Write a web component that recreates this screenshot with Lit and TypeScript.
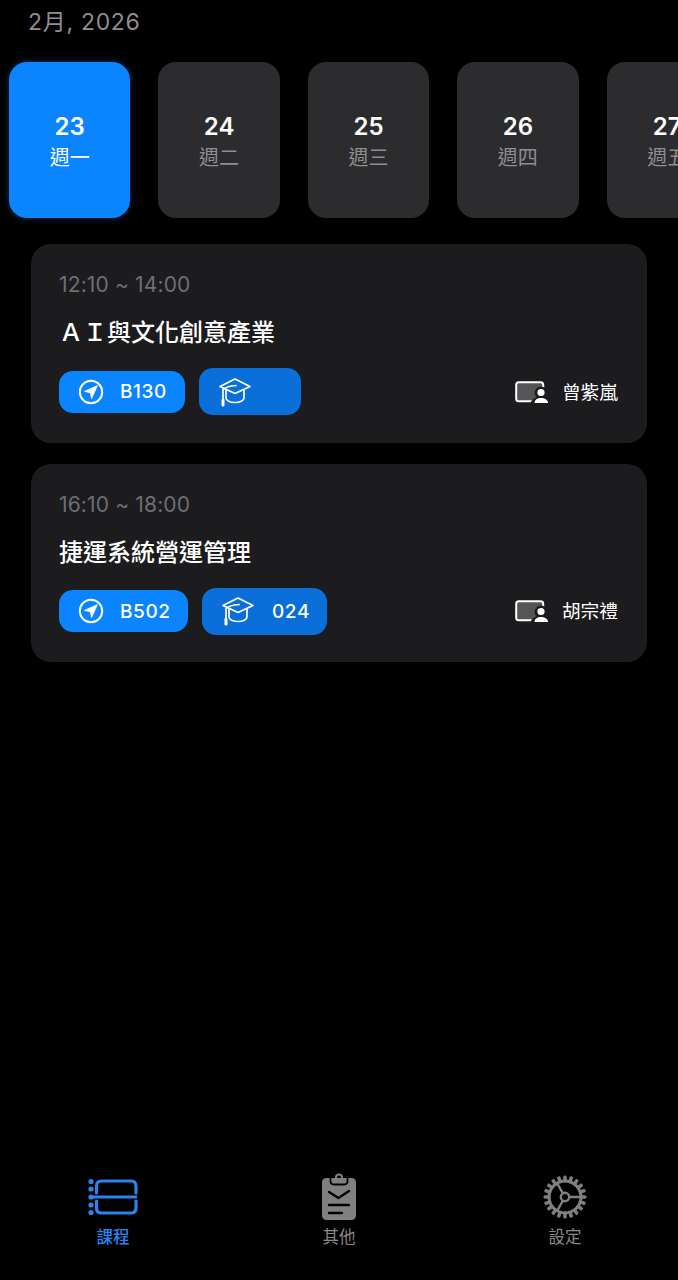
import { LitElement, html, css, svg } from 'lit';
import { customElement } from 'lit/decorators.js';

const days = [
  { num: '23', label: '週一', active: true },
  { num: '24', label: '週二' },
  { num: '25', label: '週三' },
  { num: '26', label: '週四' },
  { num: '27', label: '週五' },
];

const courses = [
  { time: '12:10 ~ 14:00', title: 'ＡＩ與文化創意產業', room: 'B130', seat: '', teacher: '曾紫嵐', roomW: 126, seatW: 102 },
  { time: '16:10 ~ 18:00', title: '捷運系統營運管理', room: 'B502', seat: '024', teacher: '胡宗禮', roomW: 129, seatW: 125 },
];

const locationIcon = svg`<svg class="pill-icon" viewBox="0 0 26 26" fill="none">
  <circle cx="13" cy="13" r="11.2" stroke="#fff" stroke-width="2"/>
  <path d="M19.4 6.6 L6.4 12.4 L12.3 13.7 L13.6 19.6 Z" fill="#fff" stroke="#fff" stroke-width="0.8" stroke-linejoin="round"/>
</svg>`;

const capIcon = svg`<svg class="cap-icon" viewBox="0 0 34 30" fill="none" stroke="#fff" stroke-width="1.7" stroke-linejoin="round" stroke-linecap="round">
  <path d="M17 2 L32 9.5 L17 16.5 L2 9.5 Z"/>
  <path d="M8 13 V21 C8 23.5 12 25.5 17 25.5 C22 25.5 26 23.5 26 21 V13"/>
  <path d="M18 8.5 C12 9 7 10.5 5 12.5 V23"/>
  <path d="M5 23 V28" stroke-width="3"/>
</svg>`;

const teacherIcon = svg`<svg class="teacher-icon" viewBox="0 0 34 24" fill="none">
  <rect x="1.2" y="1.2" width="27" height="19" rx="2.5" fill="#555557" stroke="#fff" stroke-width="2"/>
  <circle cx="26" cy="12" r="6.5" fill="#1c1c1e"/>
  <path d="M17 24 C17 19 21 17.5 26 17.5 C31 17.5 34 19 34 24 Z" fill="#1c1c1e" stroke="#1c1c1e" stroke-width="3"/>
  <circle cx="26" cy="11.5" r="3.6" fill="#fff"/>
  <path d="M19.5 22 C19.5 18.5 22.5 17 26 17 C29.5 17 33 18.5 33 22 Z" fill="#fff"/>
</svg>`;

const courseIcon = svg`<svg viewBox="0 0 50 38" fill="none" stroke="#2a84f0">
  <path d="M8.5 15 V8 C8.5 4.5 10.5 3 13.5 3 H43 C46 3 48 4.5 48 8 V15" stroke-width="3.2" stroke-linecap="round"/>
  <path d="M8.5 23 V30 C8.5 33.5 10.5 35 13.5 35 H43 C46 35 48 33.5 48 30 V23" stroke-width="3.2" stroke-linecap="round"/>
  <path d="M3 19 H49" stroke-width="2.8"/>
  <g fill="#2a84f0" stroke="none">
    <circle cx="3" cy="3.5" r="2.6"/><circle cx="3" cy="11" r="2.6"/><circle cx="3" cy="19" r="2.6"/>
    <circle cx="3" cy="27" r="2.6"/><circle cx="3" cy="34.5" r="2.6"/>
  </g>
</svg>`;

const otherIcon = svg`<svg viewBox="0 0 36 48">
  <rect x="1" y="5" width="34" height="42" rx="4.5" fill="#808083"/>
  <circle cx="18" cy="4.5" r="3" fill="none" stroke="#808083" stroke-width="2"/>
  <path d="M9.5 5 V8 C9.5 10.5 11 11.5 13 11.5 H23 C25 11.5 26.5 10.5 26.5 8 V5" fill="none" stroke="#000" stroke-width="1.8"/>
  <path d="M8 19 L17.5 25 L28 18" fill="none" stroke="#000" stroke-width="2.4" stroke-linecap="round" stroke-linejoin="round"/>
  <path d="M8 32 H28 M8 40 H21" fill="none" stroke="#000" stroke-width="2.4" stroke-linecap="round"/>
</svg>`;

const settingsTeeth = Array.from({ length: 20 }, (_, i) =>
  svg`<rect x="20.8" y="1" width="2.4" height="6" rx="0.6" fill="#808083" transform="rotate(${i * 18} 22 22)"/>`
);

const settingsIcon = svg`<svg viewBox="0 0 44 44" fill="none" stroke="#808083">
  ${settingsTeeth}
  <circle cx="22" cy="22" r="16" stroke-width="3"/>
  <circle cx="22" cy="22" r="4.2" stroke-width="2.4"/>
  <path d="M26.2 22 H38 M19.9 18.4 L14 8 M19.9 25.6 L14 36" stroke-width="2.4"/>
</svg>`;

const tabs = [
  { icon: courseIcon, label: '課程', active: true, cls: 'course' },
  { icon: otherIcon, label: '其他', cls: 'other' },
  { icon: settingsIcon, label: '設定', cls: 'settings' },
];

@customElement('app-root')
export class AppRoot extends LitElement {
  static styles = css`
    :host {
      display: block;
      width: 678px;
      height: 1280px;
      background: #000;
      overflow: hidden;
      font-family: Inter, 'Noto Sans CJK TC', sans-serif;
      color: #fff;
    }

    * {
      box-sizing: border-box;
    }

    .page {
      display: flex;
      flex-direction: column;
      height: 100%;
    }

    .month {
      padding: 7px 0 0 28px;
      height: 62px;
      font-size: 23px;
      line-height: 31px;
      letter-spacing: 0.7px;
      color: #8e8e93;
    }

    .days {
      display: flex;
      gap: 28px;
      padding-left: 9px;
      width: 800px;
    }

    .day {
      flex: none;
      width: 121.4px;
      height: 156px;
      border-radius: 18px;
      background: #2c2c2e;
      display: flex;
      flex-direction: column;
      align-items: center;
      justify-content: center;
      padding-top: 4px;
    }

    .day.active {
      background: #0a84ff;
      box-shadow: 0 0 8px rgba(10, 132, 255, 0.3);
    }

    .num {
      font-size: 24px;
      line-height: 30px;
      font-weight: 600;
    }

    .label {
      margin-top: 1px;
      font-size: 20px;
      line-height: 30px;
      color: #8e8e93;
    }

    .day.active .label {
      color: #fff;
    }

    .courses {
      display: flex;
      flex-direction: column;
      gap: 21px;
      padding: 26px 31px 0;
    }

    .card {
      height: 198.5px;
      border-radius: 20px;
      background: #1c1c1e;
      padding: 25px 29px 0 28px;
    }

    .time {
      font-size: 21px;
      line-height: 32px;
      letter-spacing: 0.15px;
      color: #6e6e73;
    }

    .title {
      margin-top: 16px;
      font-size: 24px;
      line-height: 32px;
      font-weight: 500;
    }

    .meta {
      display: flex;
      align-items: center;
      gap: 14px;
      margin-top: 18.5px;
      height: 48px;
    }

    .pill {
      display: flex;
      align-items: center;
      height: 42px;
      padding-left: 19px;
      border-radius: 14px;
      background: #0a84ff;
      font-size: 19px;
      font-weight: 500;
      letter-spacing: 0.6px;
    }

    .pill.seat {
      height: 47px;
      background: #0a6fd8;
    }

    .pill-icon {
      width: 26px;
      height: 26px;
      margin-right: 16px;
    }

    .cap-icon {
      width: 34px;
      height: 30px;
      margin-right: 17px;
    }

    .teacher {
      display: flex;
      align-items: center;
      margin-left: auto;
      font-size: 18.7px;
      gap: 13px;
    }

    .teacher span {
      margin-bottom: 3px;
    }

    .teacher-icon {
      width: 34px;
      height: 24px;
      margin-top: 2px;
    }

    nav {
      margin-top: auto;
      display: grid;
      grid-template-columns: repeat(3, 1fr);
      padding-bottom: 32px;
    }

    .tab {
      display: flex;
      flex-direction: column;
      align-items: center;
      color: #8a8a8d;
      font-size: 16.5px;
      line-height: 22px;
    }

    .tab.active {
      color: #2a84f0;
      font-weight: 500;
    }

    .tab-icon {
      height: 50px;
      display: flex;
      align-items: center;
      justify-content: center;
      margin-bottom: 4px;
    }

    .tab-icon svg {
      display: block;
    }

    .course svg {
      width: 50px;
      height: 38px;
    }

    .other svg {
      width: 36px;
      height: 48px;
    }

    .settings svg {
      width: 44px;
      height: 44px;
    }
  `;

  render() {
    return html`
      <div class="page">
        <div class="month">2月, 2026</div>
        <div class="days">
          ${days.map(
            d => html`
              <div class="day ${d.active ? 'active' : ''}">
                <div class="num">${d.num}</div>
                <div class="label">${d.label}</div>
              </div>
            `
          )}
        </div>
        <div class="courses">
          ${courses.map(
            c => html`
              <div class="card">
                <div class="time">${c.time}</div>
                <div class="title">${c.title}</div>
                <div class="meta">
                  <div class="pill" style="width: ${c.roomW}px">${locationIcon}${c.room}</div>
                  <div class="pill seat" style="width: ${c.seatW}px">${capIcon}${c.seat}</div>
                  <div class="teacher">${teacherIcon}<span>${c.teacher}</span></div>
                </div>
              </div>
            `
          )}
        </div>
        <nav>
          ${tabs.map(
            t => html`
              <div class="tab ${t.cls} ${t.active ? 'active' : ''}">
                <div class="tab-icon">${t.icon}</div>
                <div>${t.label}</div>
              </div>
            `
          )}
        </nav>
      </div>
    `;
  }
}
